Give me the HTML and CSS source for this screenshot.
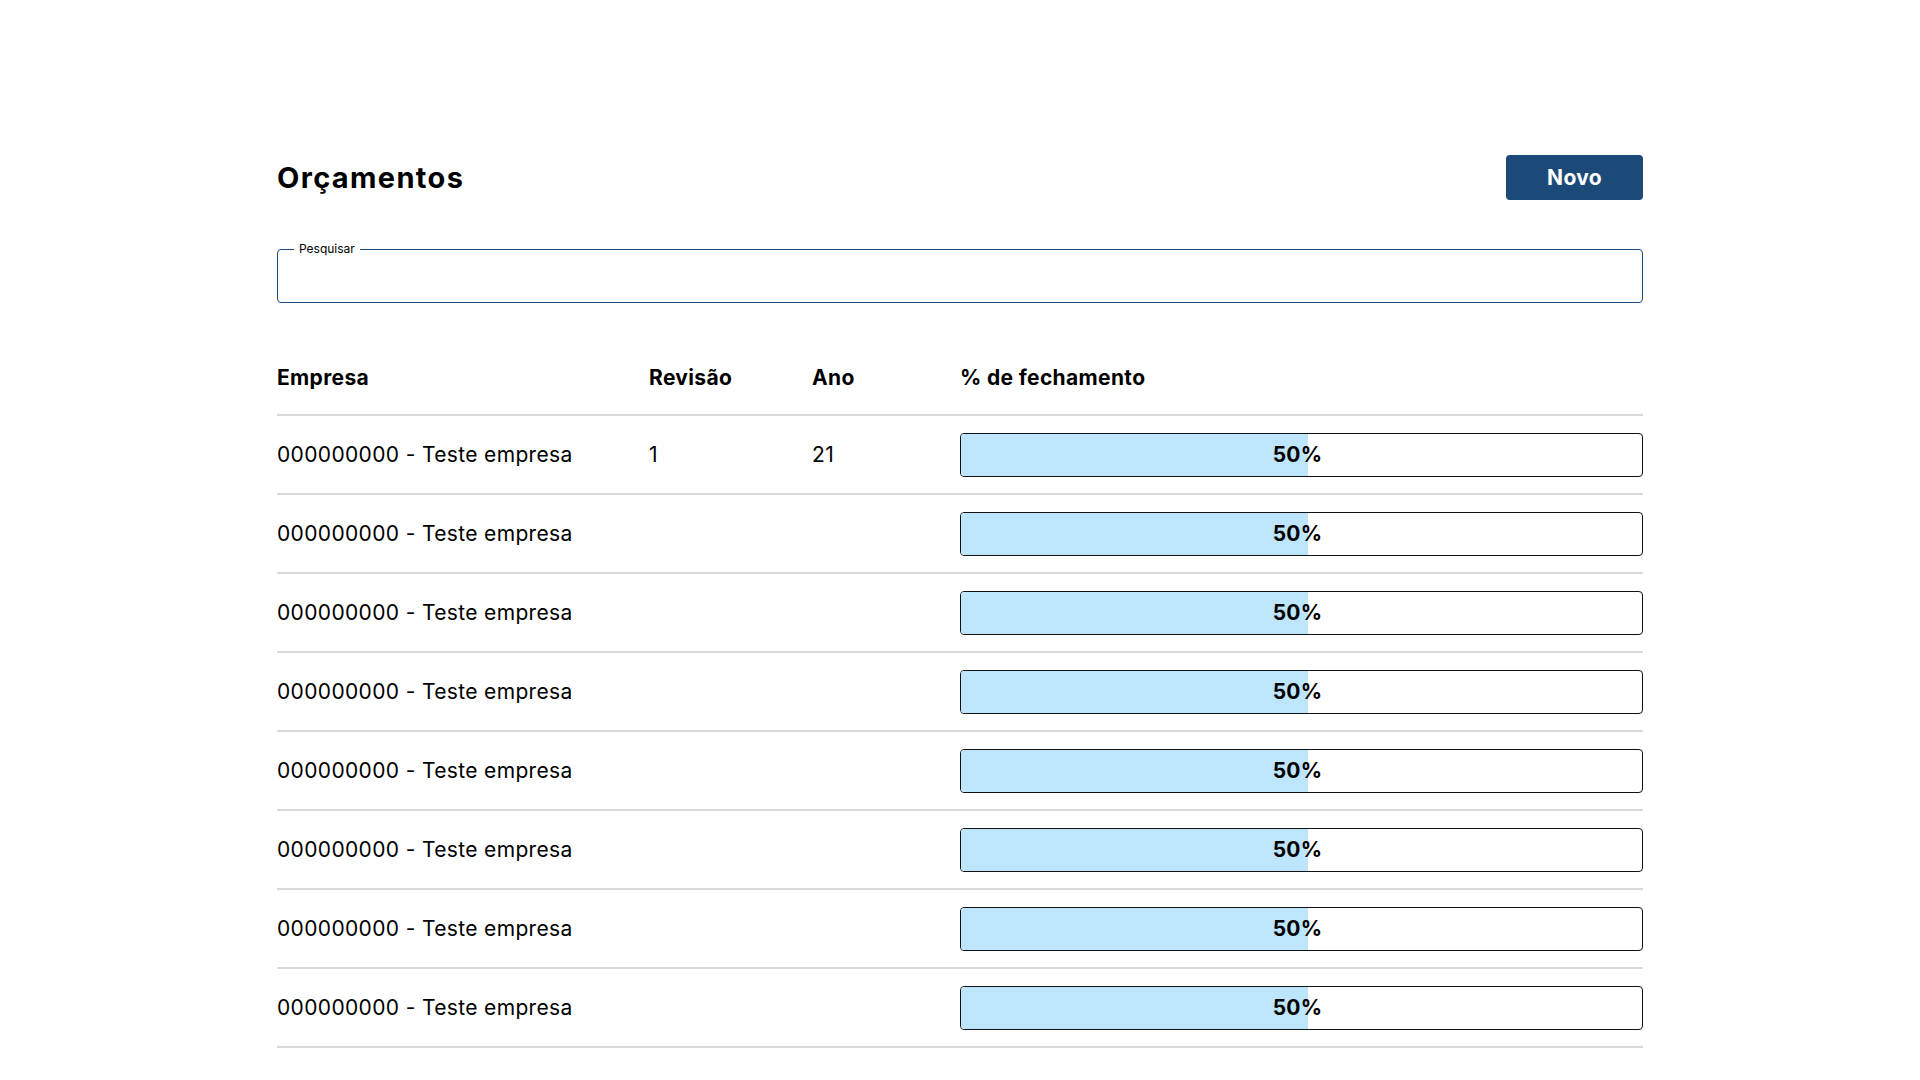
FILE: index.html
```html
<!DOCTYPE html>
<html lang="pt-BR">
<head>
<meta charset="utf-8">
<title>Orçamentos</title>
<link rel="stylesheet" href="styles.css">
</head>
<body>
<main class="page">
  <header class="page-header">
    <h1 class="title">Orçamentos</h1>
    <button class="btn-new" type="button">Novo</button>
  </header>

  <fieldset class="search">
    <legend class="search-label">Pesquisar</legend>
    <input class="search-input" type="text" aria-label="Pesquisar">
  </fieldset>

  <section class="table">
    <div class="row head">
      <div class="cell">Empresa</div>
      <div class="cell">Revisão</div>
      <div class="cell">Ano</div>
      <div class="cell">% de fechamento</div>
    </div>

    <div class="row">
      <div class="cell">000000000 - Teste empresa</div>
      <div class="cell">1</div>
      <div class="cell">21</div>
      <div class="cell"><div class="bar"><div class="bar-fill" style="width:51%"></div><span class="bar-label">50%</span></div></div>
    </div>
    <div class="row">
      <div class="cell">000000000 - Teste empresa</div>
      <div class="cell"></div>
      <div class="cell"></div>
      <div class="cell"><div class="bar"><div class="bar-fill" style="width:51%"></div><span class="bar-label">50%</span></div></div>
    </div>
    <div class="row">
      <div class="cell">000000000 - Teste empresa</div>
      <div class="cell"></div>
      <div class="cell"></div>
      <div class="cell"><div class="bar"><div class="bar-fill" style="width:51%"></div><span class="bar-label">50%</span></div></div>
    </div>
    <div class="row">
      <div class="cell">000000000 - Teste empresa</div>
      <div class="cell"></div>
      <div class="cell"></div>
      <div class="cell"><div class="bar"><div class="bar-fill" style="width:51%"></div><span class="bar-label">50%</span></div></div>
    </div>
    <div class="row">
      <div class="cell">000000000 - Teste empresa</div>
      <div class="cell"></div>
      <div class="cell"></div>
      <div class="cell"><div class="bar"><div class="bar-fill" style="width:51%"></div><span class="bar-label">50%</span></div></div>
    </div>
    <div class="row">
      <div class="cell">000000000 - Teste empresa</div>
      <div class="cell"></div>
      <div class="cell"></div>
      <div class="cell"><div class="bar"><div class="bar-fill" style="width:51%"></div><span class="bar-label">50%</span></div></div>
    </div>
    <div class="row">
      <div class="cell">000000000 - Teste empresa</div>
      <div class="cell"></div>
      <div class="cell"></div>
      <div class="cell"><div class="bar"><div class="bar-fill" style="width:51%"></div><span class="bar-label">50%</span></div></div>
    </div>
    <div class="row">
      <div class="cell">000000000 - Teste empresa</div>
      <div class="cell"></div>
      <div class="cell"></div>
      <div class="cell"><div class="bar"><div class="bar-fill" style="width:51%"></div><span class="bar-label">50%</span></div></div>
    </div>
  </section>
</main>
</body>
</html>
```

FILE: styles.css
```css
* { box-sizing: border-box; }

html, body {
  margin: 0;
  padding: 0;
  background: #ffffff;
}

body {
  font-family: "Inter", "Noto Sans", "Liberation Sans", sans-serif;
  color: #000000;
}

.page {
  width: 1366px;
  margin: 0 auto;
  padding-top: 155px;
}

.page-header {
  display: flex;
  justify-content: space-between;
  align-items: center;
  height: 45px;
}

.title {
  margin: 0;
  font-size: 29px;
  font-weight: 700;
  line-height: 1;
  letter-spacing: 1.35px;
}

.btn-new {
  width: 137px;
  height: 45px;
  border: none;
  border-radius: 4px;
  background: #1b4a79;
  color: #ffffff;
  font-family: inherit;
  font-size: 21px;
  font-weight: 700;
  letter-spacing: 0.3px;
  padding: 0;
}

.search {
  margin: 43px 0 0 0;
  padding: 0 16px;
  border: 1px solid #1b4a79;
  border-radius: 4px;
  height: 60px;
}

.search-label {
  padding: 0 5px;
  font-size: 12px;
  line-height: 12px;
  color: #000000;
}

.search-input {
  display: block;
  width: 100%;
  height: 38px;
  border: none;
  outline: none;
  background: transparent;
  font-family: inherit;
  font-size: 16px;
}

.table {
  margin-top: 41px;
}

.row {
  display: grid;
  grid-template-columns: 372px 163px 148px 1fr;
  align-items: center;
  border-bottom: 2px solid #d9d9d9;
  padding: 17px 0 16px;
  font-size: 21px;
  letter-spacing: 0.35px;
}

.row.head {
  font-weight: 700;
  padding: 0 0 24px;
  height: 72px;
  align-items: end;
}

.cell {
  line-height: 24px;
}

.bar {
  position: relative;
  height: 44px;
  border: 1px solid #111111;
  border-radius: 4px;
  overflow: hidden;
  display: flex;
  align-items: center;
  justify-content: center;
}

.bar-fill {
  position: absolute;
  left: 0;
  top: 0;
  bottom: 0;
  background: #bde5fc;
}

.bar-label {
  position: relative;
  margin-right: 8px;
  font-weight: 700;
  font-size: 21px;
  letter-spacing: 0.2px;
}
```
